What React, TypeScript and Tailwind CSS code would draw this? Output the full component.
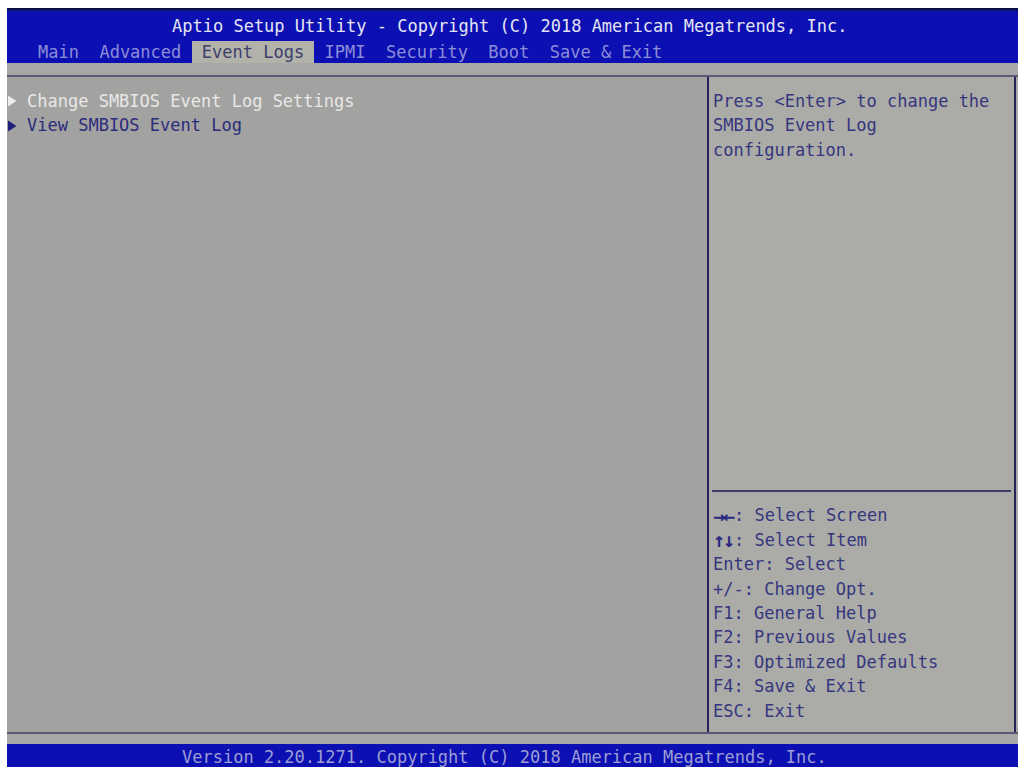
import React from "react";

const mono = { fontFamily: '"DejaVu Sans Mono", "Liberation Mono", monospace' };

function Tri({ color }: { color: string }) {
  return (
    <svg width="10" height="12" viewBox="0 0 10 12" className="shrink-0">
      <path d="M1 0.5 L9.5 6 L1 11.5 Z" fill={color} />
    </svg>
  );
}

export default function App() {
  const keys = [
    ["→←", ": Select Screen"],
    ["↑↓", ": Select Item"],
    ["", "Enter: Select"],
    ["", "+/-: Change Opt."],
    ["", "F1: General Help"],
    ["", "F2: Previous Values"],
    ["", "F3: Optimized Defaults"],
    ["", "F4: Save & Exit"],
    ["", "ESC: Exit"],
  ];
  return (
    <div className="w-[1020px] h-[767px] bg-white pt-[8px] pl-[7px] pr-[2px] overflow-hidden" style={mono}>
      <div className="flex flex-col h-[759px] bg-[#a7a7a5] text-[17px] leading-[24.4px]">
        {/* Header */}
        <div className="h-[55px] shrink-0 bg-[#0c10b2] flex flex-col">
          <div className="h-[4px] bg-gradient-to-b from-[#0a0a2a] to-[#0c10b2]" />
          <div className="h-[29px] flex items-center pl-[165px] text-[#e4e4f4] whitespace-pre">
            Aptio Setup Utility - Copyright (C) 2018 American Megatrends, Inc.
          </div>
          <div className="h-[22px] flex items-center pl-[31px] text-[#8c8ed8] whitespace-pre">
            <span>Main  Advanced </span>
            <span className="bg-[#b2b2ab] text-[#3c3e6c] h-[22px] flex items-center">{" Event Logs "}</span>
            <span>{" IPMI  Security  Boot  Save & Exit"}</span>
          </div>
        </div>
        <div className="h-[12px] shrink-0" />
        {/* Main area */}
        <div className="h-[659px] shrink-0 border-t-2 border-b-2 border-[#5a5a78] flex">
          <div className="w-[700px] bg-[#a2a2a1] pt-[12px] whitespace-pre">
            <div className="flex items-center gap-[10px] h-[24.4px]">
              <Tri color="#ececec" />
              <span className="text-[#e8e8e6]">Change SMBIOS Event Log Settings</span>
            </div>
            <div className="flex items-center gap-[10px] h-[24.4px]">
              <Tri color="#20207a" />
              <span className="text-[#2c2c7c]">View SMBIOS Event Log</span>
            </div>
          </div>
          <div className="w-[309px] bg-[#abaca8] border-l-2 border-r-2 border-[#24245a] flex flex-col">
            <div className="flex-1 pt-[12px] pl-[4px] text-[#36367e] whitespace-pre">
              <div>Press &lt;Enter&gt; to change the</div>
              <div>SMBIOS Event Log</div>
              <div>configuration.</div>
            </div>
            <div className="mx-[3px] h-[2px] bg-[#3c3c66]" />
            <div className="pt-[11px] pb-[9px] pl-[4px] text-[#36367e] whitespace-pre">
              {keys.map(([a, b], i) => (
                <div key={i} className="h-[24.4px] flex items-center">
                  {a && (
                    <span className="inline-block w-[21px] font-bold text-[#2a2a80] text-[20px] tracking-[-2px] leading-none">
                      {a}
                    </span>
                  )}
                  <span>{b}</span>
                </div>
              ))}
            </div>
          </div>
          <div className="w-[2px]" />
        </div>
        <div className="h-[10px] shrink-0" />
        {/* Footer */}
        <div className="flex-1 bg-[#0c10b2] pl-[175px] pt-[1px] text-[#9c9ed4] whitespace-pre">
          Version 2.20.1271. Copyright (C) 2018 American Megatrends, Inc.
        </div>
      </div>
    </div>
  );
}
